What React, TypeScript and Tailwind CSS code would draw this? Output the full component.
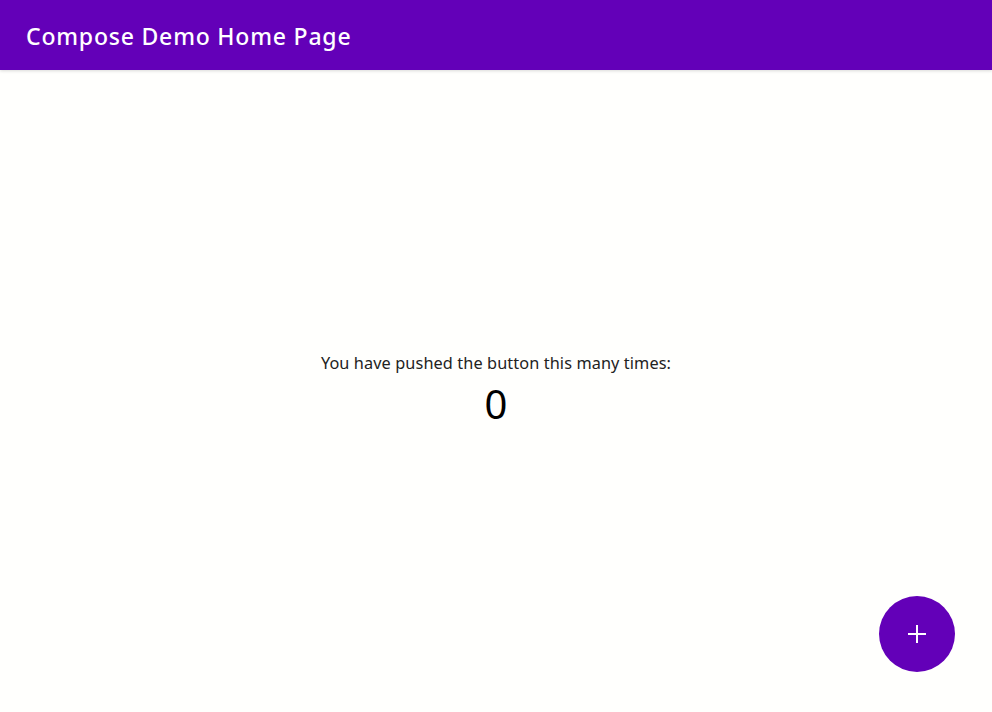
import React, { useState } from "react";

export default function App() {
  const [count, setCount] = useState(0);
  return (
    <div className="relative flex h-[712px] w-[992px] flex-col overflow-hidden bg-[#fffffd]" style={{ fontFamily: '"Noto Sans", "Open Sans", sans-serif' }}>
      <header className="flex h-[70px] shrink-0 items-center bg-[#6300b8] pl-[26px] pt-[2px] shadow-[0_1px_3px_rgba(0,0,0,0.15)]">
        <h1 className="text-[23px] font-medium tracking-[0.8px] text-white">Compose Demo Home Page</h1>
      </header>
      <main className="flex flex-1 flex-col items-center justify-center pb-[2px]">
        <p className="text-[16.3px] leading-[22px] tracking-[0.1px] text-[#222]">You have pushed the button this many times:</p>
        <p className="mt-[6px] text-[40px] leading-[48px] text-black">{count}</p>
      </main>
      <button
        onClick={() => setCount(count + 1)}
        className="absolute bottom-[40px] right-[37px] flex h-[76px] w-[76px] items-center justify-center rounded-full bg-[#6300b8]"
      >
        <svg width="20" height="20" viewBox="0 0 20 20" fill="none" stroke="white" strokeWidth="2">
          <path d="M10 1v18M1 10h18" />
        </svg>
      </button>
    </div>
  );
}
